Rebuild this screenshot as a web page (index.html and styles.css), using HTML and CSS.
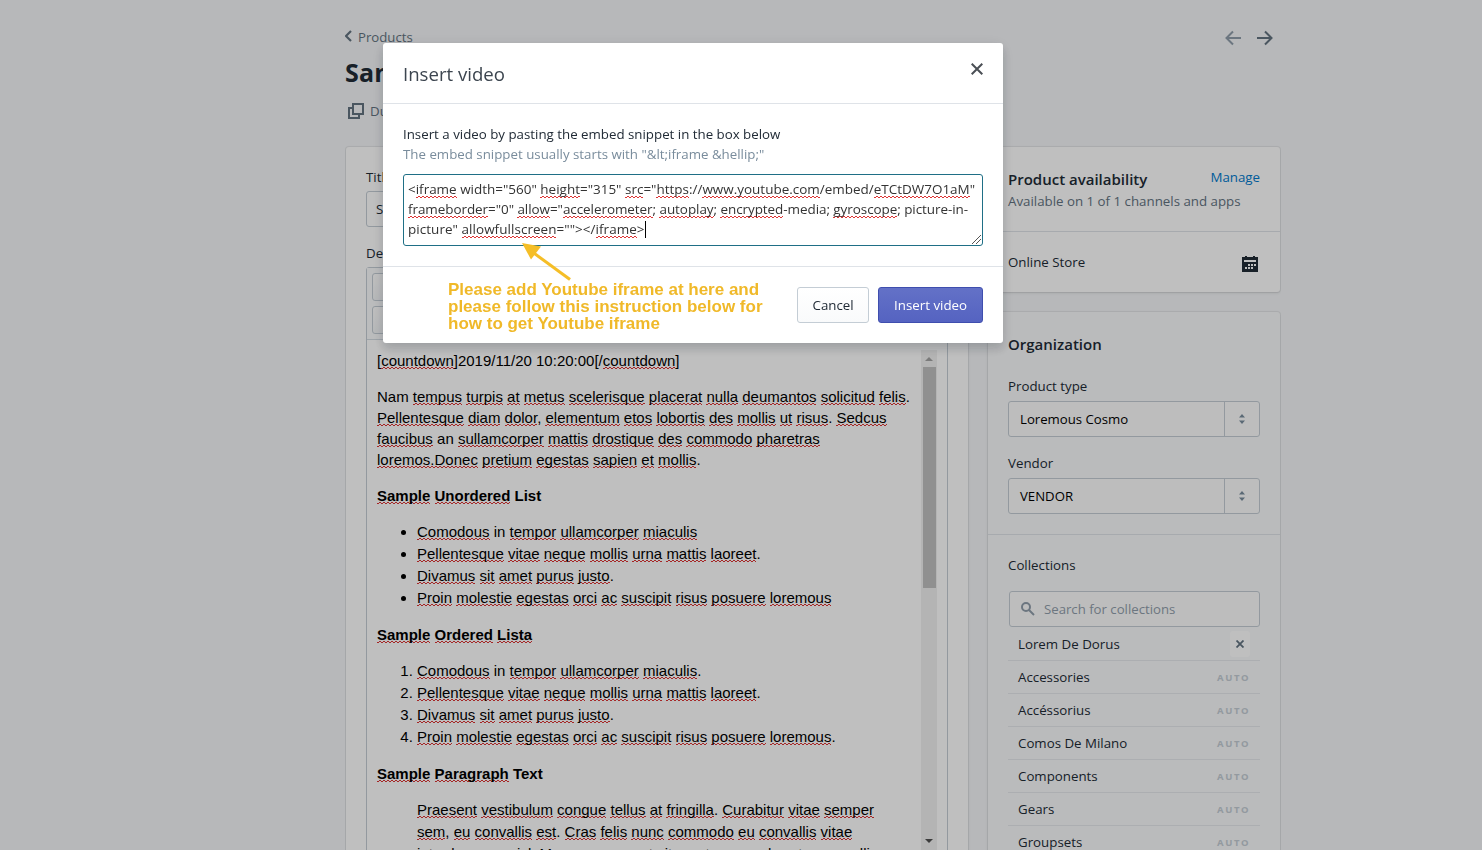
FILE: index.html
```
<!DOCTYPE html>
<html lang="en">
<head>
<meta charset="utf-8">
<title>Insert video</title>
<link rel="stylesheet" href="styles.css">
</head>
<body>
<div class="page">
  <header class="page-head">
    <div class="crumb-row">
      <a class="crumb"><svg width="8" height="12" viewBox="0 0 8 12"><path d="M7 1 2 6l5 5" fill="none" stroke="#637381" stroke-width="2.200"/></svg>Products</a>
      <div class="pager">
        <svg width="17" height="16" viewBox="0 0 17 16"><path d="M16 8H2M8 1.500 1.500 8 8 14.500" fill="none" stroke="#919eab" stroke-width="2"/></svg>
        <svg width="17" height="16" viewBox="0 0 17 16"><path d="M1 8h14M9 1.500 15.500 8 9 14.500" fill="none" stroke="#637381" stroke-width="2"/></svg>
      </div>
    </div>
    <h1 class="page-title">Sample Product</h1>
    <div class="page-actions"><svg width="16" height="16" viewBox="0 0 16 16"><path d="M5 1h10v10H5zM4 5H1v10h10v-3" fill="none" stroke="#637381" stroke-width="2"/></svg>Duplicate</div>
  </header>

  <div class="columns">
    <main class="card main-card">
      <label class="label">Title</label>
      <div class="input">Sample Product</div>
      <label class="label label-desc">Description</label>
      <div class="editor">
        <div class="toolbar">
          <div class="tool"></div>
          <div class="tool"></div>
        </div>
        <div class="editor-body">
          <div class="rte">
            <p>[<u>countdown</u>]2019/11/20 10:20:00[/<u>countdown</u>]</p>
            <p>Nam <u>tempus</u> <u>turpis</u> <u>at</u> <u>metus</u> <u>scelerisque</u> <u>placerat</u> <u>nulla</u> <u>deumantos</u> <u>solicitud</u> <u>felis</u>.<br>
            <u>Pellentesque</u> <u>diam</u> <u>dolor</u>, <u>elementum</u> <u>etos</u> <u>lobortis</u> <u>des</u> <u>mollis</u> <u>ut</u> <u>risus</u>. <u>Sedcus</u><br>
            <u>faucibus</u> an <u>sullamcorper</u> <u>mattis</u> <u>drostique</u> <u>des</u> <u>commodo</u> <u>pharetras</u><br>
            <u>loremos.Donec</u> <u>pretium</u> <u>egestas</u> <u>sapien</u> <u>et</u> <u>mollis</u>.</p>
            <h4 class="first"><u>Sample</u> <u>Unordered</u> List</h4>
            <ul>
              <li><u>Comodous</u> in <u>tempor</u> <u>ullamcorper</u> <u>miaculis</u></li>
              <li><u>Pellentesque</u> <u>vitae</u> <u>neque</u> <u>mollis</u> <u>urna</u> <u>mattis</u> <u>laoreet</u>.</li>
              <li><u>Divamus</u> <u>sit</u> <u>amet</u> <u>purus</u> <u>justo</u>.</li>
              <li><u>Proin</u> <u>molestie</u> <u>egestas</u> <u>orci</u> <u>ac</u> <u>suscipit</u> <u>risus</u> <u>posuere</u> <u>loremous</u></li>
            </ul>
            <h4><u>Sample</u> <u>Ordered</u> <u>Lista</u></h4>
            <ol>
              <li><u>Comodous</u> in <u>tempor</u> <u>ullamcorper</u> <u>miaculis</u>.</li>
              <li><u>Pellentesque</u> <u>vitae</u> <u>neque</u> <u>mollis</u> <u>urna</u> <u>mattis</u> <u>laoreet</u>.</li>
              <li><u>Divamus</u> <u>sit</u> <u>amet</u> <u>purus</u> <u>justo</u>.</li>
              <li><u>Proin</u> <u>molestie</u> <u>egestas</u> <u>orci</u> <u>ac</u> <u>suscipit</u> <u>risus</u> <u>posuere</u> <u>loremous</u>.</li>
            </ol>
            <h4><u>Sample</u> <u>Paragraph</u> Text</h4>
            <blockquote><u>Praesent</u> <u>vestibulum</u> <u>congue</u> <u>tellus</u> <u>at</u> <u>fringilla</u>. <u>Curabitur</u> <u>vitae</u> <u>semper</u><br>
            <u>sem</u>, <u>eu</u> <u>convallis</u> <u>est</u>. <u>Cras</u> <u>felis</u> <u>nunc</u> <u>commodo</u> <u>eu</u> <u>convallis</u> <u>vitae</u><br>
            <u>interdum</u> non <u>nisl</u>. <u>Maecenas</u> ac <u>est</u> <u>sit</u> <u>amet</u> <u>augue</u> <u>pharetra</u> <u>convallis</u></blockquote>
          </div>
          <div class="scroll">
            <svg width="16" height="17" viewBox="0 0 16 17"><path d="M4 11h8L8 7z" fill="#a3a3a3"/></svg>
            <div class="thumb"></div>
            <svg class="down" width="16" height="17" viewBox="0 0 16 17"><path d="M4 6h8l-4 4z" fill="#505050"/></svg>
          </div>
        </div>
      </div>
    </main>

    <aside class="side">
      <section class="card avail">
        <div class="avail-top">
          <div class="avail-head"><h2>Product availability</h2><a class="manage">Manage</a></div>
          <div class="muted">Available on 1 of 1 channels and apps</div>
        </div>
        <div class="avail-row"><span>Online Store</span>
          <svg width="16" height="16" viewBox="0 0 16 16"><path d="M0 1h3V0h2v1h6V0h2v1h3v15H0zM2 4v2h12V4zM6 8v2h2V8zM9 8v2h2V8zM12 8v2h2V8zM3 11v2h2v-2zM6 11v2h2v-2zM9 11v2h2v-2z" fill="#212b36" fill-rule="evenodd"/></svg>
        </div>
      </section>

      <section class="card org">
        <div class="org-top">
          <h2>Organization</h2>
          <label class="label">Product type</label>
          <div class="select"><span>Loremous Cosmo</span><i><svg width="6" height="10" viewBox="0 0 6 10"><path d="M0 3.500h6L3 0zM0 6.500h6L3 10z" fill="#798c9c"/></svg></i></div>
          <label class="label label-vendor">Vendor</label>
          <div class="select"><span>VENDOR</span><i><svg width="6" height="10" viewBox="0 0 6 10"><path d="M0 3.500h6L3 0zM0 6.500h6L3 10z" fill="#798c9c"/></svg></i></div>
        </div>
        <div class="coll">
          <div class="coll-title">Collections</div>
          <div class="search"><svg width="14" height="14" viewBox="0 0 14 14"><circle cx="5" cy="5" r="4" fill="none" stroke="#919eab" stroke-width="2"/><path d="m8 8 5 5" stroke="#919eab" stroke-width="2"/></svg>Search for collections</div>
          <div class="row"><span>Lorem De Dorus</span><b class="remove"><svg width="8" height="8" viewBox="0 0 8 8"><path d="m0.500 0.500 7 7M7.500 0.500l-7 7" stroke="#637381" stroke-width="1.800"/></svg></b></div>
          <div class="row"><span>Accessories</span><em>AUTO</em></div>
          <div class="row"><span>Accéssorius</span><em>AUTO</em></div>
          <div class="row"><span>Comos De Milano</span><em>AUTO</em></div>
          <div class="row"><span>Components</span><em>AUTO</em></div>
          <div class="row"><span>Gears</span><em>AUTO</em></div>
          <div class="row"><span>Groupsets</span><em>AUTO</em></div>
        </div>
      </section>
    </aside>
  </div>
</div>

<div class="backdrop">
  <div class="modal">
    <div class="modal-head">Insert video
      <svg width="12" height="12" viewBox="0 0 12 12"><path d="m0.700 0.700 10.600 10.600M11.300 0.700 0.700 11.300" stroke="#4a4f55" stroke-width="2"/></svg>
    </div>
    <div class="modal-body">
      <div>Insert a video by pasting the embed snippet in the box below</div>
      <div class="hint">The embed snippet usually starts with "&amp;lt;iframe &amp;hellip;"</div>
      <div class="snippet">&lt;<u>iframe</u> width="560" <u>height</u>="315" <u>src</u>="<u>https</u>://<u>www.youtube.com</u>/embed/<u>eTCtDW7O1aM</u>"<br><span class="l2"><u>frameborder</u>="0" <u>allow</u>="<u>accelerometer</u>; <u>autoplay</u>; <u>encrypted</u>-media; <u>gyroscope</u>; picture-in-</span><br><span class="l3">picture" <u>allowfullscreen</u>=""&gt;&lt;/<u>iframe</u>&gt;</span><span class="caret"></span>
        <svg class="grip" width="9" height="9" viewBox="0 0 9 9"><path d="M0 9 9 0M4 9l5-5" stroke="#555" stroke-width="1"/></svg>
      </div>
    </div>
    <div class="modal-foot">
      <div class="btn cancel">Cancel</div>
      <div class="btn primary">Insert video</div>
    </div>
    <svg class="arrow" width="52" height="40" viewBox="0 0 52 40"><path d="M9 8 48 36.500" stroke="#f5be27" stroke-width="3"/><path d="M0 0 19 3.500 9 16.500z" fill="#f5be27"/></svg>
    <div class="note">Please add Youtube iframe at here and<br>please follow this instruction below for<br>how to get Youtube iframe</div>
  </div>
</div>
</body>
</html>
```
FILE: styles.css
```
* { box-sizing: border-box; }
body {
  margin: 0;
  height: 850px;
  overflow: hidden;
  background: #f4f6f8;
  color: #212b36;
  font: 13.3px/20px "Open Sans", "Noto Sans", sans-serif;
}
svg { display: block; flex: none; }
h1, h2 { margin: 0; font-weight: 600; }

.page { width: 936px; height: 850px; overflow: hidden; margin-left: 345px; padding-top: 27px; }
.crumb-row { display: flex; justify-content: space-between; height: 20px; padding-right: 8px; }
.crumb { display: flex; align-items: center; gap: 6px; height: 20px; margin-left: -1px; font-size: 13.2px; color: #637381; }
.crumb svg { margin-top: -2px; }
.pager { display: flex; gap: 14px; padding-top: 3px; }
.page-title { margin-top: 9px; font-size: 25px; line-height: 32px; letter-spacing: .2px; font-weight: 700; }
.page-actions { display: flex; align-items: center; gap: 6px; margin: 13px 0 0 3px; height: 20px; color: #637381; }

.columns { display: grid; grid-template-columns: 622px 292px; gap: 20px; margin: 26px 0 0 1px; }
.card { background: #fff; border-radius: 3px; box-shadow: 0 0 0 1px rgba(63, 63, 68, .07), 0 1px 3px rgba(63, 63, 68, .15); }
.main-card { height: 760px; padding: 20px 20px 0; }
.label { display: block; }
.input { height: 36px; margin-top: 4px; padding: 7px 9px; border: 1px solid #c4cdd5; border-radius: 3px; background: #fff; }
.label-desc { margin-top: 16px; }
.editor { margin-top: 4px; height: 640px; width: 582px; border: 1px solid #c4cdd5; border-radius: 3px 3px 0 0; }
.toolbar { height: 72px; padding: 5px; background: #fafbfc; border-bottom: 1px solid #d3dbe2; }
.tool { height: 28px; width: 70px; margin-bottom: 5px; border: 1px solid #c4cdd5; border-radius: 3px; background: linear-gradient(#fff, #f4f6f8); }
.editor-body { display: flex; justify-content: space-between; height: 511px; padding: 10px 10px 0; }

.rte { width: 536px; color: #000; font: 15px/21px "Liberation Sans", Arial, sans-serif; white-space: nowrap; }
.rte p { margin: 0 0 15px; }
.rte h4 { margin: 15px 0 14px; font-size: 15px; line-height: 22px; }
.rte h4.first { margin-top: 0; }
.rte ul, .rte ol { margin: 0; padding-left: 40px; line-height: 22px; }
.rte blockquote { margin: 0 0 0 40px; line-height: 22px; }

/* Spell-check squiggle: two offset rows of 2px dashes */
u {
  text-decoration: none;
  background-image:
    linear-gradient(90deg, #d33 2px, transparent 2px),
    linear-gradient(90deg, transparent 2px, #d33 2px);
  background-size: 4px 1px, 4px 1px;
  background-position: 0 100%, 0 calc(100% - 1px);
  background-repeat: repeat-x;
}

.scroll { display: flex; flex-direction: column; align-items: center; width: 16px; height: 500px; background: #f1f1f1; }
.thumb { width: 13px; height: 221px; background: #c1c1c1; }
.down { margin-top: auto; }

h2 { font-size: 15px; line-height: 24px; }
.avail { height: 145px; }
.avail-top { height: 85px; padding: 20px; border-bottom: 1px solid #dfe3e8; }
.avail-head { display: flex; justify-content: space-between; }
.manage { color: #007ace; }
.muted { color: #637381; }
.avail-row { display: flex; justify-content: space-between; align-items: center; height: 60px; padding: 0 22px 0 20px; }
.avail-row svg { margin-top: 4px; }

.org { margin-top: 20px; height: 600px; background: #f9fafb; }
.org-top { height: 223px; padding: 20px; border-bottom: 1px solid #dfe3e8; }
.org-top h2 { margin-bottom: 20px; }
.select { display: flex; height: 36px; margin-top: 5px; border: 1px solid #c4cdd5; border-radius: 3px; background: #fdfdfd; color: #000; }
.select span { flex: 1; padding: 7px 11px; font-size: 13.2px; }
.select i { display: flex; align-items: center; justify-content: center; width: 35px; border-left: 1px solid #c4cdd5; }
.label-vendor { margin-top: 16px; }
.coll { padding: 20px; }
.coll-title { margin-bottom: 16px; }
.search { display: flex; align-items: center; gap: 9px; height: 36px; padding-left: 11px; margin-left: 1px; border: 1px solid #c4cdd5; border-radius: 3px; background: #fdfdfd; font-size: 13.2px; color: #919eab; }
.row { display: flex; justify-content: space-between; align-items: center; height: 33px; padding: 0 10px; border-bottom: 1px solid #e6e9ec; }
.search + .row { height: 34px; }
.row em { font: 700 9.5px/20px "Noto Sans", sans-serif; letter-spacing: 1.6px; color: #c4cdd5; padding-top: 1px; }
.remove { display: flex; align-items: center; justify-content: center; width: 20px; height: 26px; border-radius: 3px; background: #fff; }

.backdrop { position: fixed; inset: 0; padding-top: 43px; background: rgba(0, 0, 0, .25); }
.modal { position: relative; width: 620px; height: 300px; margin-left: 383px; background: #fff; border-radius: 3px; box-shadow: 0 2px 16px rgba(33, 43, 54, .08), 0 6px 10px rgba(33, 43, 54, .16); }
.modal-head { display: flex; justify-content: space-between; height: 61px; padding: 17px 20px 0; border-bottom: 1px solid #dfe3e8; font-size: 18.600px; line-height: 28px; color: #3c454f; }
.modal-head svg { margin-top: 3px; }
.modal-body { height: 163px; padding: 20px; border-bottom: 1px solid #dfe3e8; }
.hint { color: #798c9c; }
.snippet { position: relative; height: 72px; margin-top: 10px; padding: 4px; border: 1px solid #1f6f86; border-radius: 3px; font-size: 13.470px; color: #333; white-space: nowrap; }
.l2 { letter-spacing: -.06px; }
.l3 { letter-spacing: .05px; }
.caret { display: inline-block; width: 1px; height: 17px; background: #000; vertical-align: -4px; }
.grip { position: absolute; right: 1px; bottom: 1px; }
.modal-foot { display: flex; justify-content: flex-end; gap: 9px; padding: 20px; }
.btn { height: 36px; padding: 7px 15px; border: 1px solid #c4cdd5; border-radius: 3px; background: linear-gradient(#fff, #f9fafb); }
.cancel { width: 72px; padding: 7px 14px; text-align: center; }
.primary { border-color: #3f4eae; background: linear-gradient(#6371c7, #5563c1); color: #fff; }
.arrow { position: absolute; left: 139px; top: 200px; }
.note { position: absolute; left: 65px; top: 238px; color: #f0b929; font: 700 17px/17px "Liberation Sans", Arial, sans-serif; white-space: nowrap; }
```
